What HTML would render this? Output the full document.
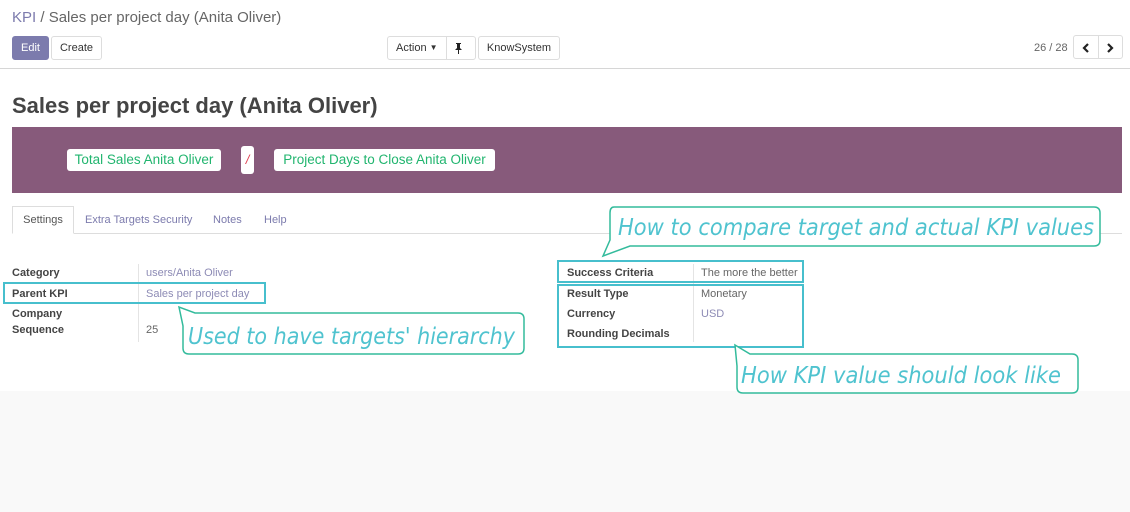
<!DOCTYPE html>
<html><head><meta charset="utf-8"><style>
*{box-sizing:border-box;margin:0;padding:0}
body{width:1130px;height:512px;background:#f9f9f9;font-family:"Liberation Sans",sans-serif;position:relative;overflow:hidden}
.top{position:absolute;left:0;top:0;width:1130px;height:391px;background:#fff}
.hr{position:absolute;left:0;top:68px;width:1130px;height:1px;background:#d6d6d6}
.abs{position:absolute}
.btn{position:absolute;height:24px;border:1px solid #ddd;border-radius:3px;font-size:11px;color:#333;line-height:23px;text-align:center;background:#fff}
.lbl{position:absolute;font-size:11px;font-weight:bold;color:#444}
.val{position:absolute;font-size:11px;color:#666}
.hl{position:absolute;border:2px solid #47bfcd}
.callt{font-family:"DejaVu Sans",sans-serif;font-style:italic;fill:#4fc3cf}
</style></head><body>
<div class="top"></div>
<div class="abs" style="left:12px;top:9px;font-size:15px;color:#666"><span style="color:#7c7bad">KPI</span> / Sales per project day (Anita Oliver)</div>
<div class="btn" style="left:12px;top:36px;width:37px;background:#7c7bad;border-color:#7c7bad;color:#fff">Edit</div>
<div class="btn" style="left:51px;top:36px;width:51px">Create</div>
<div class="btn" style="left:387px;top:36px;width:89px;text-align:left;padding-left:8px">Action <span style="font-size:8px;position:relative;top:-1px">&#9660;</span><span style="position:absolute;left:58px;top:-1px;width:1px;height:24px;background:#ddd"></span>
<svg style="position:absolute;left:67px;top:6px" width="7" height="11" viewBox="0 0 7 11"><path d="M1,0 H6 V1 H5 V5 L7,7 H4 V11 H3 V7 H0 L2,5 V1 H1 Z" fill="#222"/></svg></div>
<div class="btn" style="left:478px;top:36px;width:82px">KnowSystem</div>
<div class="abs" style="left:1034px;top:42px;font-size:11px;color:#666">26 / 28</div>
<div class="btn" style="left:1073px;top:35px;width:50px">
<svg style="position:absolute;left:8px;top:7px" width="8" height="10"><path d="M6,1 L2,5 L6,9" stroke="#222" stroke-width="2.2" fill="none"/></svg>
<span style="position:absolute;left:24px;top:-1px;width:1px;height:24px;background:#ddd"></span>
<svg style="position:absolute;left:32px;top:7px" width="8" height="10"><path d="M2,1 L6,5 L2,9" stroke="#222" stroke-width="2.2" fill="none"/></svg></div>
<div class="hr"></div>
<div class="abs" style="left:12px;top:93px;font-size:22px;font-weight:bold;color:#444">Sales per project day (Anita Oliver)</div>
<div class="abs" style="left:12px;top:127px;width:1110px;height:66px;background:#875a7b"></div>
<div class="abs" style="left:67px;top:149px;width:154px;height:22px;background:#fff;border-radius:3px;color:#21b56f;font-size:13.5px;line-height:22px;text-align:center">Total Sales Anita Oliver</div>
<div class="abs" style="left:241px;top:146px;width:13px;height:28px;background:#fff;border-radius:3px;color:#e04050;font-size:13px;line-height:28px;text-align:center;font-style:italic">/</div>
<div class="abs" style="left:274px;top:149px;width:221px;height:22px;background:#fff;border-radius:3px;color:#21b56f;font-size:13.5px;line-height:22px;text-align:center">Project Days to Close Anita Oliver</div>
<div class="abs" style="left:12px;top:233px;width:1110px;height:1px;background:#ddd"></div>
<div class="abs" style="left:12px;top:206px;width:62px;height:28px;background:#fff;border:1px solid #ddd;border-bottom-color:#fff;font-size:11px;color:#555;text-align:center;line-height:27px">Settings</div>
<div class="abs" style="left:85px;top:214px;font-size:11px;color:#7c7bad">Extra Targets Security</div>
<div class="abs" style="left:213px;top:214px;font-size:11px;color:#7c7bad">Notes</div>
<div class="abs" style="left:264px;top:214px;font-size:11px;color:#7c7bad">Help</div>

<div class="abs" style="left:138px;top:264px;width:1px;height:78px;background:#e4e4e4"></div>
<div class="lbl" style="left:12px;top:267px">Category</div><div class="val" style="left:146px;top:267px;color:#8d8bb5">users/Anita Oliver</div>
<div class="lbl" style="left:12px;top:288px">Parent KPI</div><div class="val" style="left:146px;top:288px;color:#8d8bb5">Sales per project day</div>
<div class="lbl" style="left:12px;top:308px">Company</div>
<div class="lbl" style="left:12px;top:324px">Sequence</div><div class="val" style="left:146px;top:324px">25</div>
<div class="hl" style="left:3px;top:282px;width:263px;height:22px"></div>

<div class="abs" style="left:693px;top:264px;width:1px;height:78px;background:#e4e4e4"></div>
<div class="lbl" style="left:567px;top:267px">Success Criteria</div><div class="val" style="left:701px;top:267px">The more the better</div>
<div class="lbl" style="left:567px;top:288px">Result Type</div><div class="val" style="left:701px;top:288px">Monetary</div>
<div class="lbl" style="left:567px;top:308px">Currency</div><div class="val" style="left:701px;top:308px;color:#8d8bb5">USD</div>
<div class="lbl" style="left:567px;top:328px">Rounding Decimals</div>
<div class="hl" style="left:557px;top:260px;width:247px;height:23px"></div>
<div class="hl" style="left:557px;top:284px;width:247px;height:64px"></div>

<svg class="abs" style="left:0;top:0" width="1130" height="512">
<g fill="#fff" stroke="#33bb9c" stroke-width="1.5">
<path d="M614,207 H1094 Q1100,207 1100,213 V240 Q1100,246 1094,246 H630 L603,256 L610,240 V213 Q610,207 614,207 Z"/>
<path d="M195,313 H518 Q524,313 524,319 V348 Q524,354 518,354 H189 Q183,354 183,348 V326 L179,307 Z"/>
<path d="M750,354 H1072 Q1078,354 1078,360 V387 Q1078,393 1072,393 H743 Q737,393 737,387 V366 L735,345 Z"/>
</g>
<text class="callt" x="618" y="235" font-size="23" textLength="476" lengthAdjust="spacingAndGlyphs">How to compare target and actual KPI values</text>
<text class="callt" x="188" y="344" font-size="23" textLength="327" lengthAdjust="spacingAndGlyphs">Used to have targets' hierarchy</text>
<text class="callt" x="741" y="383" font-size="23" textLength="320" lengthAdjust="spacingAndGlyphs">How KPI value should look like</text>
</svg>
</body></html>
